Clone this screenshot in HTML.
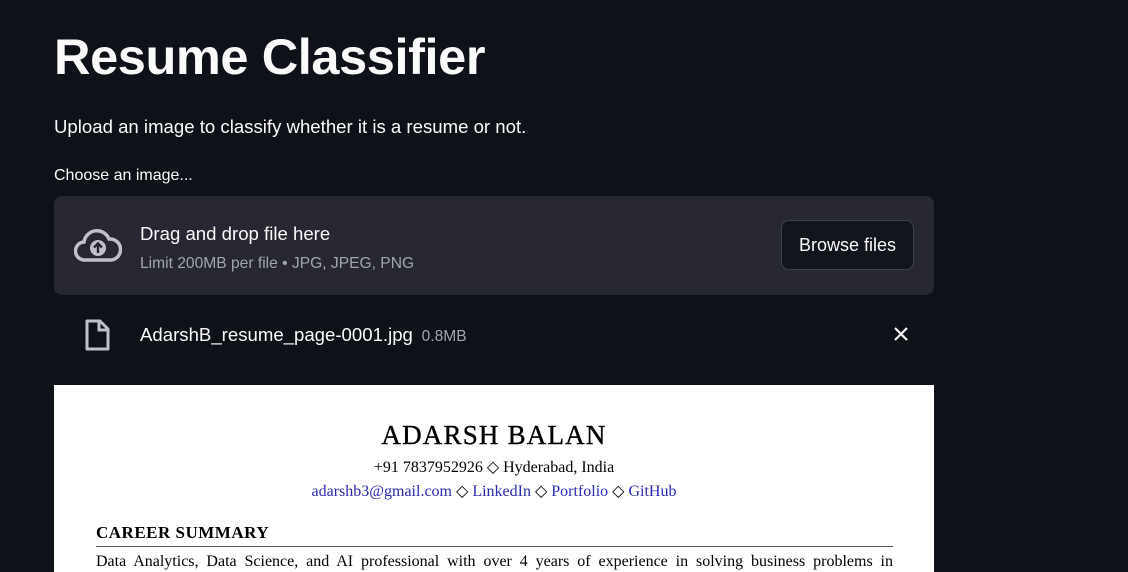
<!DOCTYPE html>
<html><head><meta charset="utf-8"><style>
*{margin:0;padding:0;box-sizing:border-box}
html,body{width:1128px;height:572px;overflow:hidden;background:#0e1117;color:#fafafa;font-family:"Liberation Sans",sans-serif}
.abs{position:absolute;white-space:nowrap}
h1{position:absolute;left:54px;top:27px;font-size:50.5px;font-weight:700;letter-spacing:-0.4px}
.drop{position:absolute;left:54px;top:196px;width:880px;height:99px;background:#262730;border-radius:8px}
.btn{position:absolute;left:781px;top:220px;width:133px;height:50px;border:1px solid #3f414b;border-radius:8px;background:#13151c;font-size:18px;text-align:center;line-height:48px}
.paper{position:absolute;left:54px;top:385px;width:880px;height:187px;background:#fff;color:#000;font-family:"Liberation Serif",serif}
.c{position:absolute;left:0;width:880px;text-align:center}
a{color:#2929b0;text-decoration:none}
</style></head><body>
<h1>Resume Classifier</h1>
<div class="abs" style="left:54px;top:116px;font-size:18.6px">Upload an image to classify whether it is a resume or not.</div>
<div class="abs" style="left:54px;top:167px;font-size:16px">Choose an image...</div>
<div class="drop"></div>
<svg class="abs" style="left:74px;top:228px" width="48" height="36" viewBox="0 0 48 36"><path d="M13 32H11A9 9 0 0 1 10 14A13 13 0 0 1 35 11A10.5 10.5 0 0 1 37 32H13Z" fill="none" stroke="#c0c1c8" stroke-width="3.5"/><circle cx="24" cy="20" r="8" fill="#c0c1c8"/><path d="M24 25V16M20 19.5L24 15.5L28 19.5" stroke="#262730" stroke-width="2.4" fill="none"/></svg>
<div class="abs" style="left:140px;top:223px;font-size:18.6px">Drag and drop file here</div>
<div class="abs" style="left:140px;top:255px;font-size:15.6px;color:#a3a5ad">Limit 200MB per file • JPG, JPEG, PNG</div>
<div class="btn">Browse files</div>
<svg class="abs" style="left:84px;top:319px" width="26" height="32" viewBox="0 0 26 32"><path d="M3 2H16L24 10V30H3Z" fill="none" stroke="#c0c1c8" stroke-width="3" stroke-linejoin="round"/><path d="M15 2V11H24" fill="none" stroke="#c0c1c8" stroke-width="3"/></svg>
<div class="abs" style="left:140px;top:324px;font-size:18.6px">AdarshB_resume_page-0001.jpg<span style="font-size:15.6px;color:#a3a5ad">&nbsp;&nbsp;0.8MB</span></div>
<svg class="abs" style="left:893px;top:326px" width="16" height="16" viewBox="0 0 16 16"><path d="M2 2L14 14M14 2L2 14" stroke="#fafafa" stroke-width="2.2"/></svg>
<div class="paper">
<div class="c" style="top:35px;font-size:27px;letter-spacing:1.2px;-webkit-text-stroke:0.4px #000">ADARSH BALAN</div>
<div class="c" style="top:72px;font-size:16px">+91 7837952926 ◇ Hyderabad, India</div>
<div class="c" style="top:96px;font-size:16px"><a>adarshb3@gmail.com</a> ◇ <a>LinkedIn</a> ◇ <a>Portfolio</a> ◇ <a>GitHub</a></div>
<div class="abs" style="left:42px;top:138px;font-size:17px;font-weight:700;letter-spacing:.5px">CAREER SUMMARY</div>
<div class="abs" style="left:42px;top:161px;width:797px;height:1px;background:#555"></div>
<div class="abs" style="left:42px;top:168px;width:797px;font-size:16px;text-align:justify;text-align-last:justify;white-space:normal">Data Analytics, Data Science, and AI professional with over 4 years of experience in solving business problems in</div>
</div>
</body></html>
